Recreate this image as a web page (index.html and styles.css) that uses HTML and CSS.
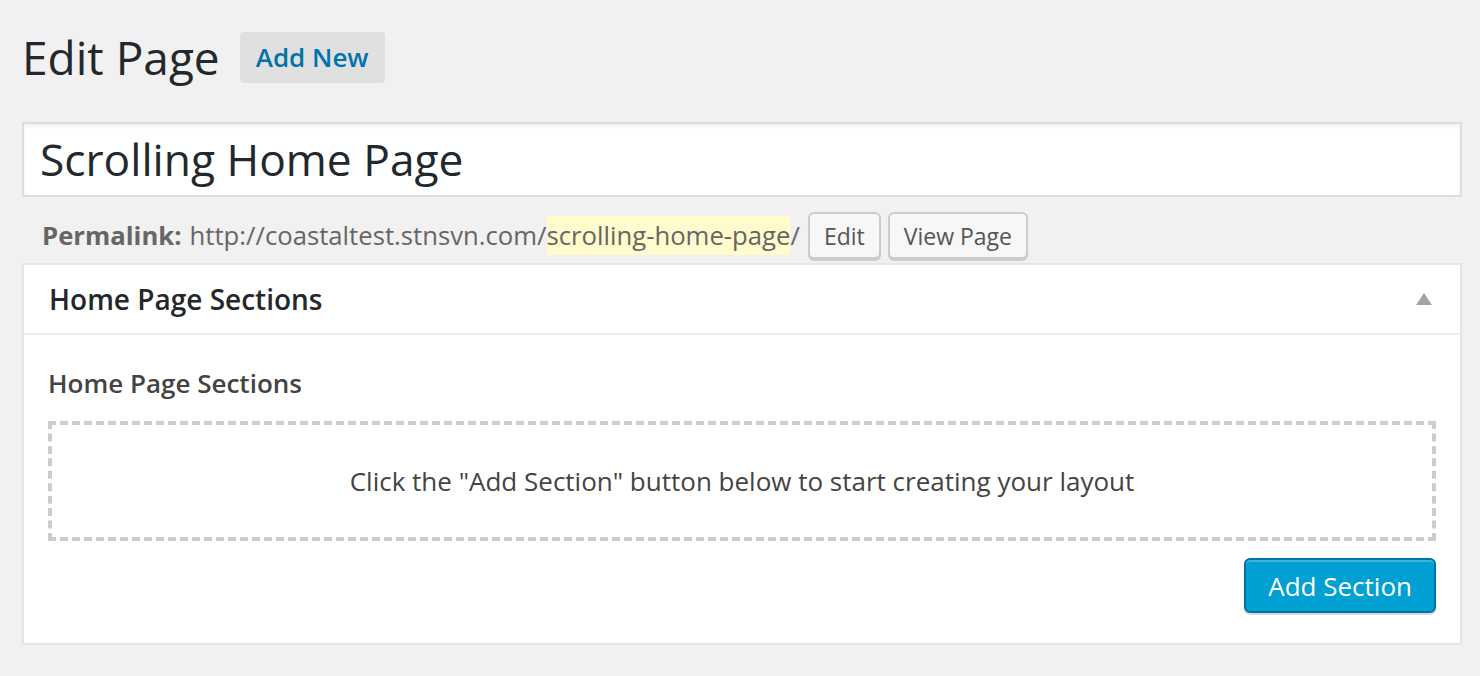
FILE: index.html
```html
<!DOCTYPE html>
<html>
<head>
<meta charset="utf-8">
<title>Edit Page</title>
<link rel="stylesheet" href="styles.css">
</head>
<body>
<div class="wrap">
  <div class="page-head">
    <h1 class="page-title">Edit Page</h1>
    <a class="add-new" href="#">Add New</a>
  </div>
  <div class="title-box">Scrolling Home Page</div>
  <div class="permalink">
    <span class="plabel">Permalink:</span>
    <span class="purl">http://coastaltest.stnsvn.com/<span class="slug">scrolling-home-page</span>/</span>
    <button class="btn-small">Edit</button>
    <button class="btn-small">View Page</button>
  </div>
  <div class="postbox">
    <div class="postbox-head">
      <h2 class="postbox-title">Home Page Sections</h2>
      <span class="toggle"></span>
    </div>
    <div class="postbox-body">
      <div class="field-label">Home Page Sections</div>
      <div class="dropzone">Click the "Add Section" button below to start creating your layout</div>
      <div class="actions">
        <button class="btn-primary">Add Section</button>
      </div>
    </div>
  </div>
</div>
</body>
</html>
```
FILE: styles.css
```css
html, body {
  margin: 0;
  padding: 0;
  background: #f1f1f1;
  font-family: "Open Sans", "Noto Sans", sans-serif;
  color: #444;
}
.wrap {
  padding: 28px 18px 0 22px;
}
.page-head {
  display: flex;
  align-items: center;
  height: 58px;
}
.page-title {
  margin: 0;
  font-size: 46px;
  line-height: 58px;
  font-weight: 400;
  color: #23282d;
}
.add-new {
  margin-left: 20px;
  display: inline-flex;
  align-items: center;
  height: 51px;
  padding: 0 16px;
  background: #e0e0e0;
  border-radius: 4px;
  color: #0073aa;
  font-weight: 600;
  font-size: 26px;
  text-decoration: none;
}
.title-box {
  margin-top: 36px;
  height: 71px;
  border: 2px solid #ddd;
  background: #fff;
  box-shadow: inset 0 2px 4px rgba(0,0,0,.07);
  padding-left: 16px;
  font-size: 44.3px;
  line-height: 71px;
  color: #23282d;
}
.permalink {
  margin-top: 15px;
  height: 47px;
  display: flex;
  align-items: center;
  padding-left: 20px;
  font-size: 25.7px;
  color: #666;
}
.plabel {
  font-weight: 700;
  margin-right: 8px;
}
.slug {
  background: #fffbcc;
  padding: 2px 0;
}
.btn-small {
  margin-left: 8px;
  height: 47px;
  padding: 0 14px;
  border: 2px solid #ccc;
  border-radius: 6px;
  background: #f7f7f7;
  box-shadow: 0 2px 0 #ccc;
  font-family: inherit;
  font-size: 23px;
  color: #555;
}
.btn-small + .btn-small {
  margin-left: 7px;
}
.postbox {
  margin-top: 4px;
  background: #fff;
  border: 2px solid #e5e5e5;
  box-shadow: 0 2px 2px rgba(0,0,0,.04);
}
.postbox-head {
  display: flex;
  align-items: center;
  justify-content: space-between;
  height: 68px;
  padding: 0 28px 0 25px;
  border-bottom: 2px solid #eee;
}
.postbox-title {
  margin: 0;
  font-size: 28px;
  font-weight: 600;
  color: #23282d;
}
.toggle {
  width: 0;
  height: 0;
  border-left: 8px solid transparent;
  border-right: 8px solid transparent;
  border-bottom: 12px solid #a0a5aa;
}
.postbox-body {
  padding: 30px 24px 30px 24px;
}
.field-label {
  font-size: 26px;
  line-height: 36px;
  font-weight: 600;
  color: #444;
}
.dropzone {
  margin-top: 20px;
  height: 112px;
  border: 4px dashed #ccc;
  display: flex;
  align-items: center;
  justify-content: center;
  font-size: 26px;
  color: #444;
}
.actions {
  display: flex;
  justify-content: flex-end;
  margin-top: 17px;
}
.btn-primary {
  height: 55px;
  padding: 0 22px;
  background: #00a0d2;
  border: 2px solid #0073aa;
  border-radius: 6px;
  box-shadow: inset 0 2px 0 rgba(120,200,230,.5), 0 2px 0 rgba(0,0,0,.15);
  color: #fff;
  font-family: inherit;
  font-size: 26px;
}
```
